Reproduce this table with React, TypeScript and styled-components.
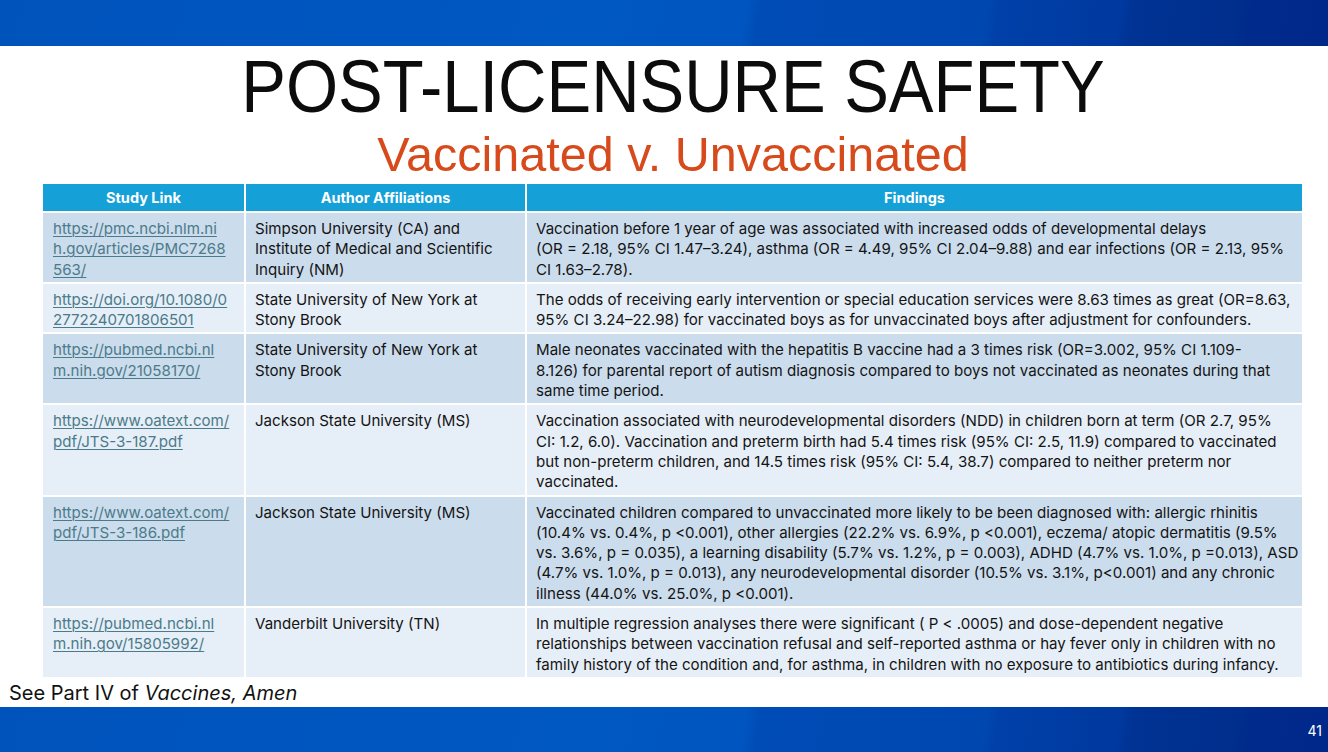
import React from 'react';
import styled, { createGlobalStyle } from 'styled-components';

const GlobalStyle = createGlobalStyle`
  html, body {
    margin: 0;
    padding: 0;
    background: #ffffff;
  }
  body {
    font-family: Inter, 'Liberation Sans', Arial, sans-serif;
    color: #111111;
  }
`;

type Row = {
  link: string[];
  authors: string[];
  findings: string[];
};

const rows: Row[] = [
  {
    link: ['https://pmc.ncbi.nlm.ni', 'h.gov/articles/PMC7268', '563/'],
    authors: ['Simpson University (CA) and', 'Institute of Medical and Scientific', 'Inquiry (NM)'],
    findings: [
      'Vaccination before 1 year of age was associated with increased odds of developmental delays',
      '(OR = 2.18, 95% CI 1.47–3.24), asthma (OR = 4.49, 95% CI 2.04–9.88) and ear infections (OR = 2.13, 95%',
      'CI 1.63–2.78).',
    ],
  },
  {
    link: ['https://doi.org/10.1080/0', '2772240701806501'],
    authors: ['State University of New York at', 'Stony Brook'],
    findings: [
      'The odds of receiving early intervention or special education services were 8.63 times as great (OR=8.63,',
      '95% CI 3.24–22.98) for vaccinated boys as for unvaccinated boys after adjustment for confounders.',
    ],
  },
  {
    link: ['https://pubmed.ncbi.nl', 'm.nih.gov/21058170/'],
    authors: ['State University of New York at', 'Stony Brook'],
    findings: [
      'Male neonates vaccinated with the hepatitis B vaccine had a 3 times risk (OR=3.002, 95% CI 1.109-',
      '8.126) for parental report of autism diagnosis compared to boys not vaccinated as neonates during that',
      'same time period.',
    ],
  },
  {
    link: ['https://www.oatext.com/', 'pdf/JTS-3-187.pdf'],
    authors: ['Jackson State University (MS)'],
    findings: [
      'Vaccination associated with neurodevelopmental disorders (NDD) in children born at term (OR 2.7, 95%',
      'CI: 1.2, 6.0). Vaccination and preterm birth had 5.4 times risk (95% CI: 2.5, 11.9) compared to vaccinated',
      'but non-preterm children, and 14.5 times risk (95% CI: 5.4, 38.7) compared to neither preterm nor',
      'vaccinated.',
    ],
  },
  {
    link: ['https://www.oatext.com/', 'pdf/JTS-3-186.pdf'],
    authors: ['Jackson State University (MS)'],
    findings: [
      'Vaccinated children compared to unvaccinated more likely to be been diagnosed with: allergic rhinitis',
      '(10.4% vs. 0.4%, p <0.001), other allergies (22.2% vs. 6.9%, p <0.001), eczema/ atopic dermatitis (9.5%',
      'vs. 3.6%, p = 0.035), a learning disability (5.7% vs. 1.2%, p = 0.003), ADHD (4.7% vs. 1.0%, p =0.013), ASD',
      '(4.7% vs. 1.0%, p = 0.013), any neurodevelopmental disorder (10.5% vs. 3.1%, p<0.001) and any chronic',
      'illness (44.0% vs. 25.0%, p <0.001).',
    ],
  },
  {
    link: ['https://pubmed.ncbi.nl', 'm.nih.gov/15805992/'],
    authors: ['Vanderbilt University (TN)'],
    findings: [
      'In multiple regression analyses there were significant ( P < .0005) and dose-dependent negative',
      'relationships between vaccination refusal and self-reported asthma or hay fever only in children with no',
      'family history of the condition and, for asthma, in children with no exposure to antibiotics during infancy.',
    ],
  },
];

const Slide = styled.div`
  width: 1328px;
  height: 752px;
  display: flex;
  flex-direction: column;
  overflow: hidden;
`;

const Band = styled.div<{ $height: number }>`
  height: ${(p) => p.$height}px;
  flex-shrink: 0;
  background: linear-gradient(
    100deg,
    #0053bb 0%,
    #0058c3 45%,
    #0055c0 56%,
    #004cb6 57%,
    #0047b0 74%,
    #0040a8 75%,
    #00399f 84%,
    #003394 85%,
    #002e8d 93%,
    #002a8b 94%,
    #00288a 100%
  );
  display: flex;
  align-items: center;
  justify-content: flex-end;
  padding-right: 6px;
  box-sizing: border-box;
`;

const PageNumber = styled.span`
  color: #ffffff;
  font-size: 14px;
  margin-top: 2px;
`;

const Heading = styled.div`
  display: flex;
  flex-direction: column;
  align-items: center;
  padding-left: 18px;
  margin-top: 4px;
`;

const Title = styled.h1`
  margin: 0;
  font-family: 'Liberation Sans', Arial, sans-serif;
  font-weight: 400;
  font-size: 74px;
  line-height: 74px;
  color: #0c0c0c;
  transform: scaleX(0.905);
  white-space: nowrap;
`;

const Subtitle = styled.h2`
  margin: 6px 0 0;
  font-family: 'Liberation Sans', Arial, sans-serif;
  font-weight: 400;
  font-size: 48.5px;
  line-height: 48px;
  color: #d74a1b;
  white-space: nowrap;
`;

const Table = styled.div`
  margin: 6px 0 0 43px;
  width: 1259px;
  display: grid;
  grid-template-columns: 201px 279px 775px;
  gap: 2px;
  background: #ffffff;
`;

const HeadCell = styled.div`
  height: 27px;
  background: #15a0d8;
  color: #ffffff;
  font-weight: 700;
  font-size: 14.5px;
  display: flex;
  align-items: center;
  justify-content: center;
`;

const Cell = styled.div<{ $shade: boolean }>`
  background: ${(p) => (p.$shade ? '#cbdcec' : '#e6eef7')};
  padding: 6px 9px 2px 9px;
  font-size: 15.1px;
  line-height: 20.3px;
  color: #141414;
`;

const Line = styled.div`
  white-space: nowrap;
`;

const LinkLine = styled(Line)`
  color: #4b7b8a;
  text-decoration: underline;
  text-decoration-thickness: 1px;
  text-underline-offset: 2px;
  padding-left: 1px;
`;

const Footer = styled.div`
  margin: 4px 0 0 9px;
  font-size: 20px;
  line-height: 24px;
  color: #111111;
`;

const Spacer = styled.div`
  flex: 1;
`;

export default function App() {
  return (
    <>
      <GlobalStyle />
      <Slide>
        <Band $height={46} />
        <Heading>
          <Title>POST-LICENSURE SAFETY</Title>
          <Subtitle>Vaccinated v. Unvaccinated</Subtitle>
        </Heading>
        <Table>
          <HeadCell>Study Link</HeadCell>
          <HeadCell>Author Affiliations</HeadCell>
          <HeadCell>Findings</HeadCell>
          {rows.map((row, idx) => {
            const shade = idx % 2 === 0;
            return (
              <React.Fragment key={idx}>
                <Cell $shade={shade}>
                  {row.link.map((l, i) => (
                    <LinkLine key={i}>{l}</LinkLine>
                  ))}
                </Cell>
                <Cell $shade={shade}>
                  {row.authors.map((l, i) => (
                    <Line key={i}>{l}</Line>
                  ))}
                </Cell>
                <Cell $shade={shade}>
                  {row.findings.map((l, i) => (
                    <Line key={i}>{l}</Line>
                  ))}
                </Cell>
              </React.Fragment>
            );
          })}
        </Table>
        <Footer>
          See Part IV of <i>Vaccines, Amen</i>
        </Footer>
        <Spacer />
        <Band $height={45}>
          <PageNumber>41</PageNumber>
        </Band>
      </Slide>
    </>
  );
}
